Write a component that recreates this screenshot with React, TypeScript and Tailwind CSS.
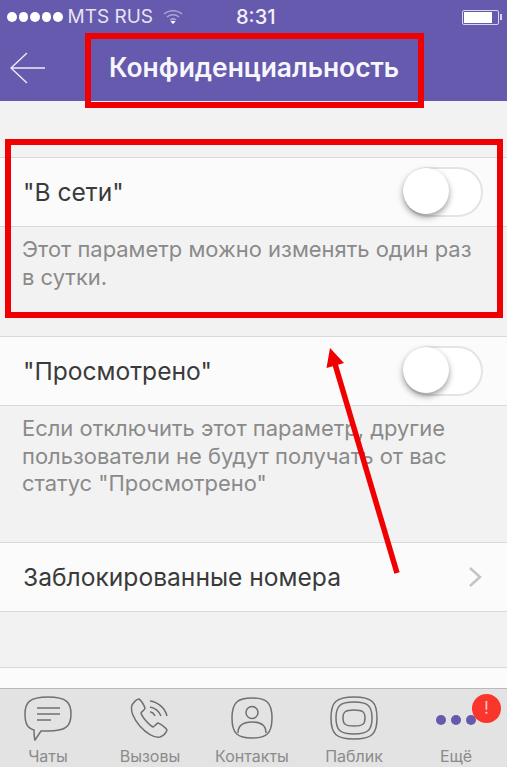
const font = { fontFamily: '"Inter", "Liberation Sans", sans-serif' };

function Toggle() {
  return (
    <div className="relative h-[50px] w-[80px] rounded-full border-2 border-[#e4e4e4] bg-white">
      <div className="absolute left-[-2px] top-[-1px] h-[46px] w-[46px] rounded-full bg-white shadow-[0_3px_6px_rgba(0,0,0,0.4)]" />
    </div>
  );
}

function Row({ label, children }: { label: string; children?: React.ReactNode }) {
  return (
    <div className="flex h-[70px] items-center justify-between border-y border-[#d9d9d9] bg-[#fbfbfb] pl-[23px] pr-[24px] text-[24.6px] leading-none text-[#3a3a3a]">
      <span>{label}</span>
      {children}
    </div>
  );
}

function Note({ children, className }: { children: React.ReactNode; className: string }) {
  return <p className={`pl-[22px] pr-[20px] pt-[9px] text-[21.95px] leading-[27.500px] text-[#8a8a8a] ${className}`}>{children}</p>;
}

function Tab({ label, children }: { label: string; children: React.ReactNode }) {
  return (
    <div className="flex w-[102px] shrink-0 flex-col items-center">
      <div className="flex h-[48px] items-center justify-center">{children}</div>
      <span className="mt-[4px] text-[16px] leading-[20px] text-[#8b8b8b]">{label}</span>
    </div>
  );
}

export default function App() {
  return (
    <div style={font} className="relative flex h-[767px] w-[507px] flex-col overflow-hidden bg-[#f2f2f2]">
      <div className="h-[101px] shrink-0 bg-[#655aad] text-white">
        <div className="relative flex h-[34px] items-center pl-[7px]">
          <div className="flex gap-[2px]">
            {[0, 1, 2, 3, 4].map((i) => (
              <span key={i} className="h-[9.500px] w-[9.500px] rounded-full bg-white" />
            ))}
          </div>
          <span className="ml-[5px] text-[19px] text-[#e6e3f3]">MTS RUS</span>
          <svg className="ml-[10px]" width="20" height="16" viewBox="0 0 20 16" fill="none" stroke="#a9a3d4" strokeWidth="1.500">
            <path d="M1 5c5-4.500 13-4.500 18 0" />
            <path d="M4 8c3.500-3 8.500-3 12 0" />
            <path d="M7 11c2-1.500 4-1.500 6 0" />
            <path d="M7.500 12.500 10 15l2.500-2.500c-1.500-1-3.500-1-5 0z" fill="#fff" stroke="none" />
          </svg>
          <span className="ml-[53px] text-[20px] font-medium text-[#f2f0fa]">8:31</span>
          <div className="ml-auto mr-[5px] flex items-center">
            <div className="h-[15px] w-[37px] rounded-[2px] border border-[#d8d5ec] p-[1px]">
              <div className="h-full w-[28px] bg-white" />
            </div>
            <div className="ml-[1px] h-[6px] w-[2px] bg-[#d8d5ec]" />
          </div>
        </div>
        <div className="flex h-[67px] items-center">
          <svg className="ml-[10px]" width="36" height="32" viewBox="0 0 36 32" fill="none" stroke="#efedf8" strokeWidth="1.400">
            <path d="M35 16H1" />
            <path d="M17 1 1 16l16 15" />
          </svg>
          <span className="ml-[63px] text-[26.400px] font-semibold leading-none text-[#f7f6fc]">Конфиденциальность</span>
        </div>
      </div>

      <div className="mt-[56px]">
        <Row label={'"В сети"'}><Toggle /></Row>
        <Note className="h-[109px]">Этот параметр можно изменять один раз в сутки.</Note>
        <Row label={'"Просмотрено"'}><Toggle /></Row>
        <Note className="h-[136px]">Если отключить этот параметр, другие пользователи не будут получать от вас статус "Просмотрено"</Note>
        <Row label="Заблокированные номера">
          <svg width="16" height="24" viewBox="0 0 16 24" fill="none" stroke="#c4c4c4" strokeWidth="2.500">
            <path d="m3 3 10 9-10 9" />
          </svg>
        </Row>
      </div>

      <div className="mt-[55px] h-[21px] shrink-0 border-t border-[#d9d9d9] bg-[#fbfbfb]" />

      <div className="flex flex-1 items-start border-t border-[#b9b9b9] bg-[#e3e3e3] pt-[5px] pl-0">
        <div className="ml-[-3px] flex">
          <Tab label="Чаты">
            <svg width="48" height="46" viewBox="0 0 48 46" fill="none" stroke="#707070" strokeWidth="1.500">
              <path d="M10 35C3 33 1 28 1 19 1 8 5 2 24 2s23 6 23 17c0 13-6 17-23 17-3 0-5 0-7 0-2 3-4 6-6 9-1-3-1-7-1-10z" />
              <path d="M13 13h23M13 19h23M13 25h14" />
            </svg>
          </Tab>
          <Tab label="Вызовы">
            <svg width="40" height="42" viewBox="0 0 40 42" fill="none" stroke="#707070" strokeWidth="1.500">
              <path d="M2 8c2-3 5-6 7-6 2 1 5 6 6 9 0 2-3 3-4 5 1 4 8 12 12 14 2-1 3-3 5-4 3 1 8 5 9 7-1 3-4 6-7 7C18 42-2 20 2 8z" />
              <path d="M20 4c8 1 15 7 17 15M20 10c5 1 9 4 11 9M20 15c2 0 4 2 5 4" />
            </svg>
          </Tab>
          <Tab label="Контакты">
            <svg width="42" height="42" viewBox="0 0 42 42" fill="none" stroke="#707070" strokeWidth="1.500">
              <path d="M21 1c14 0 20 4 20 20s-6 20-20 20S1 37 1 21 7 1 21 1z" />
              <circle cx="21" cy="15.500" r="6" />
              <path d="M7 36c0-8 5-11 14-11s14 3 14 11" />
            </svg>
          </Tab>
          <Tab label="Паблик">
            <svg width="50" height="46" viewBox="0 0 50 46" fill="none" stroke="#707070" strokeWidth="1.500">
              <path d="M25 2c18 0 23 5 23 21s-5 21-23 21S2 39 2 23 7 2 25 2z" />
              <path d="M25 7c14 0 18 4 18 16s-4 16-18 16S7 35 7 23 11 7 25 7z" />
              <path d="M25 15c9 0 11 2 11 8s-2 8-11 8-11-2-11-8 2-8 11-8z" />
            </svg>
          </Tab>
          <Tab label="Ещё">
            <div className="relative flex gap-[5px] pt-[3px]">
              <span className="h-[10px] w-[10px] rounded-full bg-[#655aad]" />
              <span className="h-[10px] w-[10px] rounded-full bg-[#655aad]" />
              <span className="h-[10px] w-[10px] rounded-full bg-[#655aad]" />
              <span className="absolute left-[36px] top-[-18px] flex h-[29px] w-[29px] items-center justify-center rounded-full bg-[#f9352c] text-[17px] leading-none text-[#f3c6c3]">!</span>
            </div>
          </Tab>
        </div>
      </div>

      <div className="absolute left-[85px] top-[33px] h-[75px] w-[339px] border-[6px] border-[#f00000]" />
      <div className="absolute left-[5px] top-[139px] h-[179px] w-[498px] border-[6px] border-[#f00000]" />
      <svg className="absolute left-0 top-0" width="507" height="767" viewBox="0 0 507 767">
        <path d="M397 573 335 364" stroke="#f00000" strokeWidth="5.500" />
        <path d="M330 348 344 363 326.500 368z" fill="#f00000" />
      </svg>
    </div>
  );
}
